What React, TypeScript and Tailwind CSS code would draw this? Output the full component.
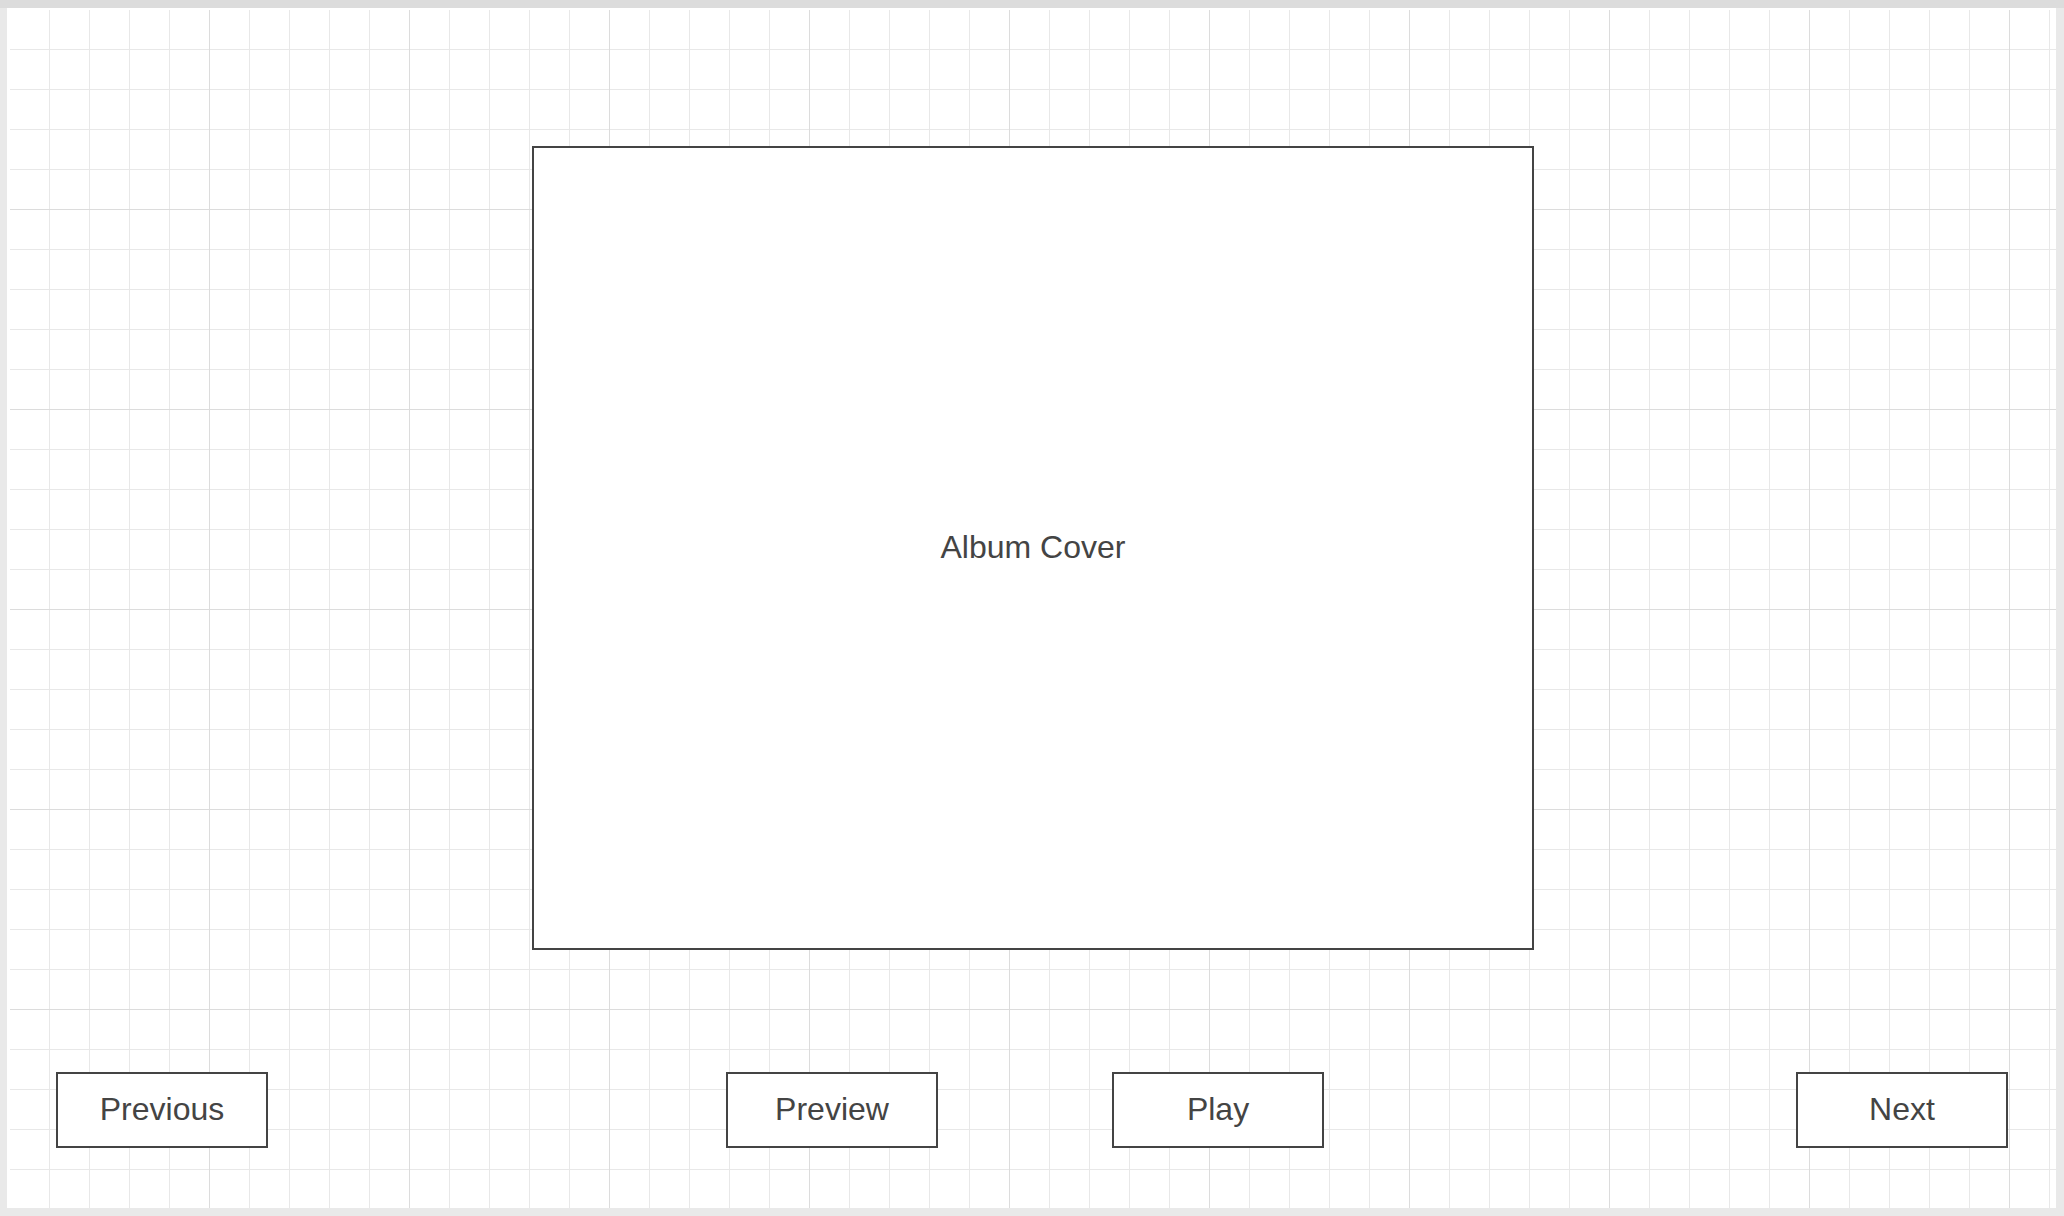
import { type FC } from 'react';

const BUTTON_CLS =
    'w-[212px] h-[76px] shrink-0 flex items-center justify-center pb-[2px] bg-white border-2 border-[#444] text-[32px] text-[#444]';

const GRID_CLS =
    'bg-white bg-[linear-gradient(to_right,#dcdcdc_1px,transparent_1px),linear-gradient(to_bottom,#dcdcdc_1px,transparent_1px),linear-gradient(to_right,#e8e8e8_1px,transparent_1px),linear-gradient(to_bottom,#e8e8e8_1px,transparent_1px)] bg-[size:200px_200px,200px_200px,40px_40px,40px_40px] bg-[position:199px_199px,199px_199px,39px_39px,39px_39px]';

const App: FC = () => {
    return (
        <div className="w-[2064px] h-[1216px] flex flex-col bg-[#e9e9e9] overflow-hidden font-['Liberation_Sans',Arial,sans-serif]">
            {/* top strip */}
            <div className="h-[8px] shrink-0 bg-[#dcdcdc]" />
            <div className="flex-1 flex pl-[7px] pr-[8px] pb-[8px]">
                <div className="flex-1 bg-white pt-[2px] pl-[3px]">
                    <div className={`h-full ${GRID_CLS}`}>
                        <div className="pt-[136px]">
                            <div className="mx-auto w-[1002px] h-[804px] flex items-center justify-center pb-[2px] bg-white border-2 border-[#444]">
                                <span className="text-[32px] text-[#444]">Album Cover</span>
                            </div>
                        </div>
                        <div className="flex mt-[122px] pl-[46px]">
                            <div className={BUTTON_CLS}>Previous</div>
                            <div className={`${BUTTON_CLS} ml-[458px]`}>Preview</div>
                            <div className={`${BUTTON_CLS} ml-[174px]`}>Play</div>
                            <div className={`${BUTTON_CLS} ml-[472px]`}>Next</div>
                        </div>
                    </div>
                </div>
            </div>
        </div>
    );
};

export default App;
